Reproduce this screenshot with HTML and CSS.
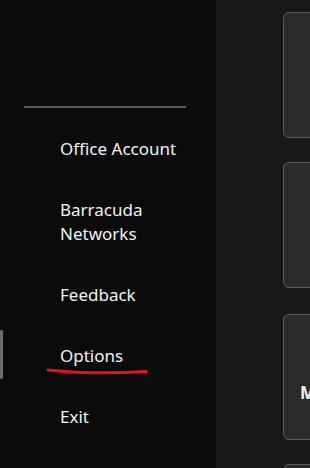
FILE: index.html
```html
<!DOCTYPE html>
<html lang="en">
<head>
    <meta charset="UTF-8">
    <meta name="viewport" content="width=device-width, initial-scale=1.0">
    <title>Options</title>
    <link rel="stylesheet" href="styles.css">
</head>
<body>
    <div class="sidebar">
        <div class="divider"></div>
        <ul class="menu">
            <li class="menu-item">Office Account</li>
            <li class="menu-item">Barracuda<br>Networks</li>
            <li class="menu-item">Feedback</li>
            <li class="menu-item active">
                <span class="indicator"></span>
                Options
                <svg class="scribble" width="104" height="12" viewBox="0 0 104 12">
                    <path d="M2 3 C 25 5.5, 60 7, 100 4.5" fill="none" stroke="#e3161b" stroke-width="3" stroke-linecap="round"/>
                </svg>
            </li>
            <li class="menu-item">Exit</li>
        </ul>
    </div>

    <div class="main">
        <div class="card"></div>
        <div class="card"></div>
        <div class="card card-gap"><span class="card-label">M</span></div>
        <div class="card"></div>
    </div>
</body>
</html>
```

FILE: styles.css
```css
html, body {
    margin: 0;
    padding: 0;
    height: 100%;
}
body {
    display: flex;
    font-family: "Noto Sans", "Open Sans", sans-serif;
    background-color: #171717;
    color: #f2f2f2;
    overflow: hidden;
}
.sidebar {
    width: 216px;
    flex-shrink: 0;
    background-color: #0b0b0b;
    padding-top: 106px;
}
.divider {
    margin-left: 24px;
    width: 162px;
    height: 2px;
    background-color: #5c5c5c;
}
.menu {
    list-style: none;
    margin: 12px 0 0 0;
    padding: 0;
}
.menu-item {
    position: relative;
    padding: 17px 0 20px 60px;
    font-size: 17px;
    line-height: 24px;
}
.indicator {
    position: absolute;
    left: 0;
    top: 3px;
    width: 3px;
    height: 49px;
    border-radius: 1px;
    background-color: #6b6b6b;
}
.scribble {
    position: absolute;
    left: 46px;
    top: 40px;
}
.main {
    flex: 1;
    padding-top: 12px;
    padding-left: 67px;
    overflow: hidden;
}
.card {
    width: 200px;
    height: 124px;
    margin-bottom: 24px;
    background-color: #2b2b2b;
    border: 1px solid #5a5a5a;
    border-radius: 6px;
}
.card-gap {
    margin-top: 26px;
}
.card-label {
    display: block;
    padding: 66px 0 0 16px;
    font-size: 17px;
    font-weight: bold;
    line-height: 24px;
}
```
